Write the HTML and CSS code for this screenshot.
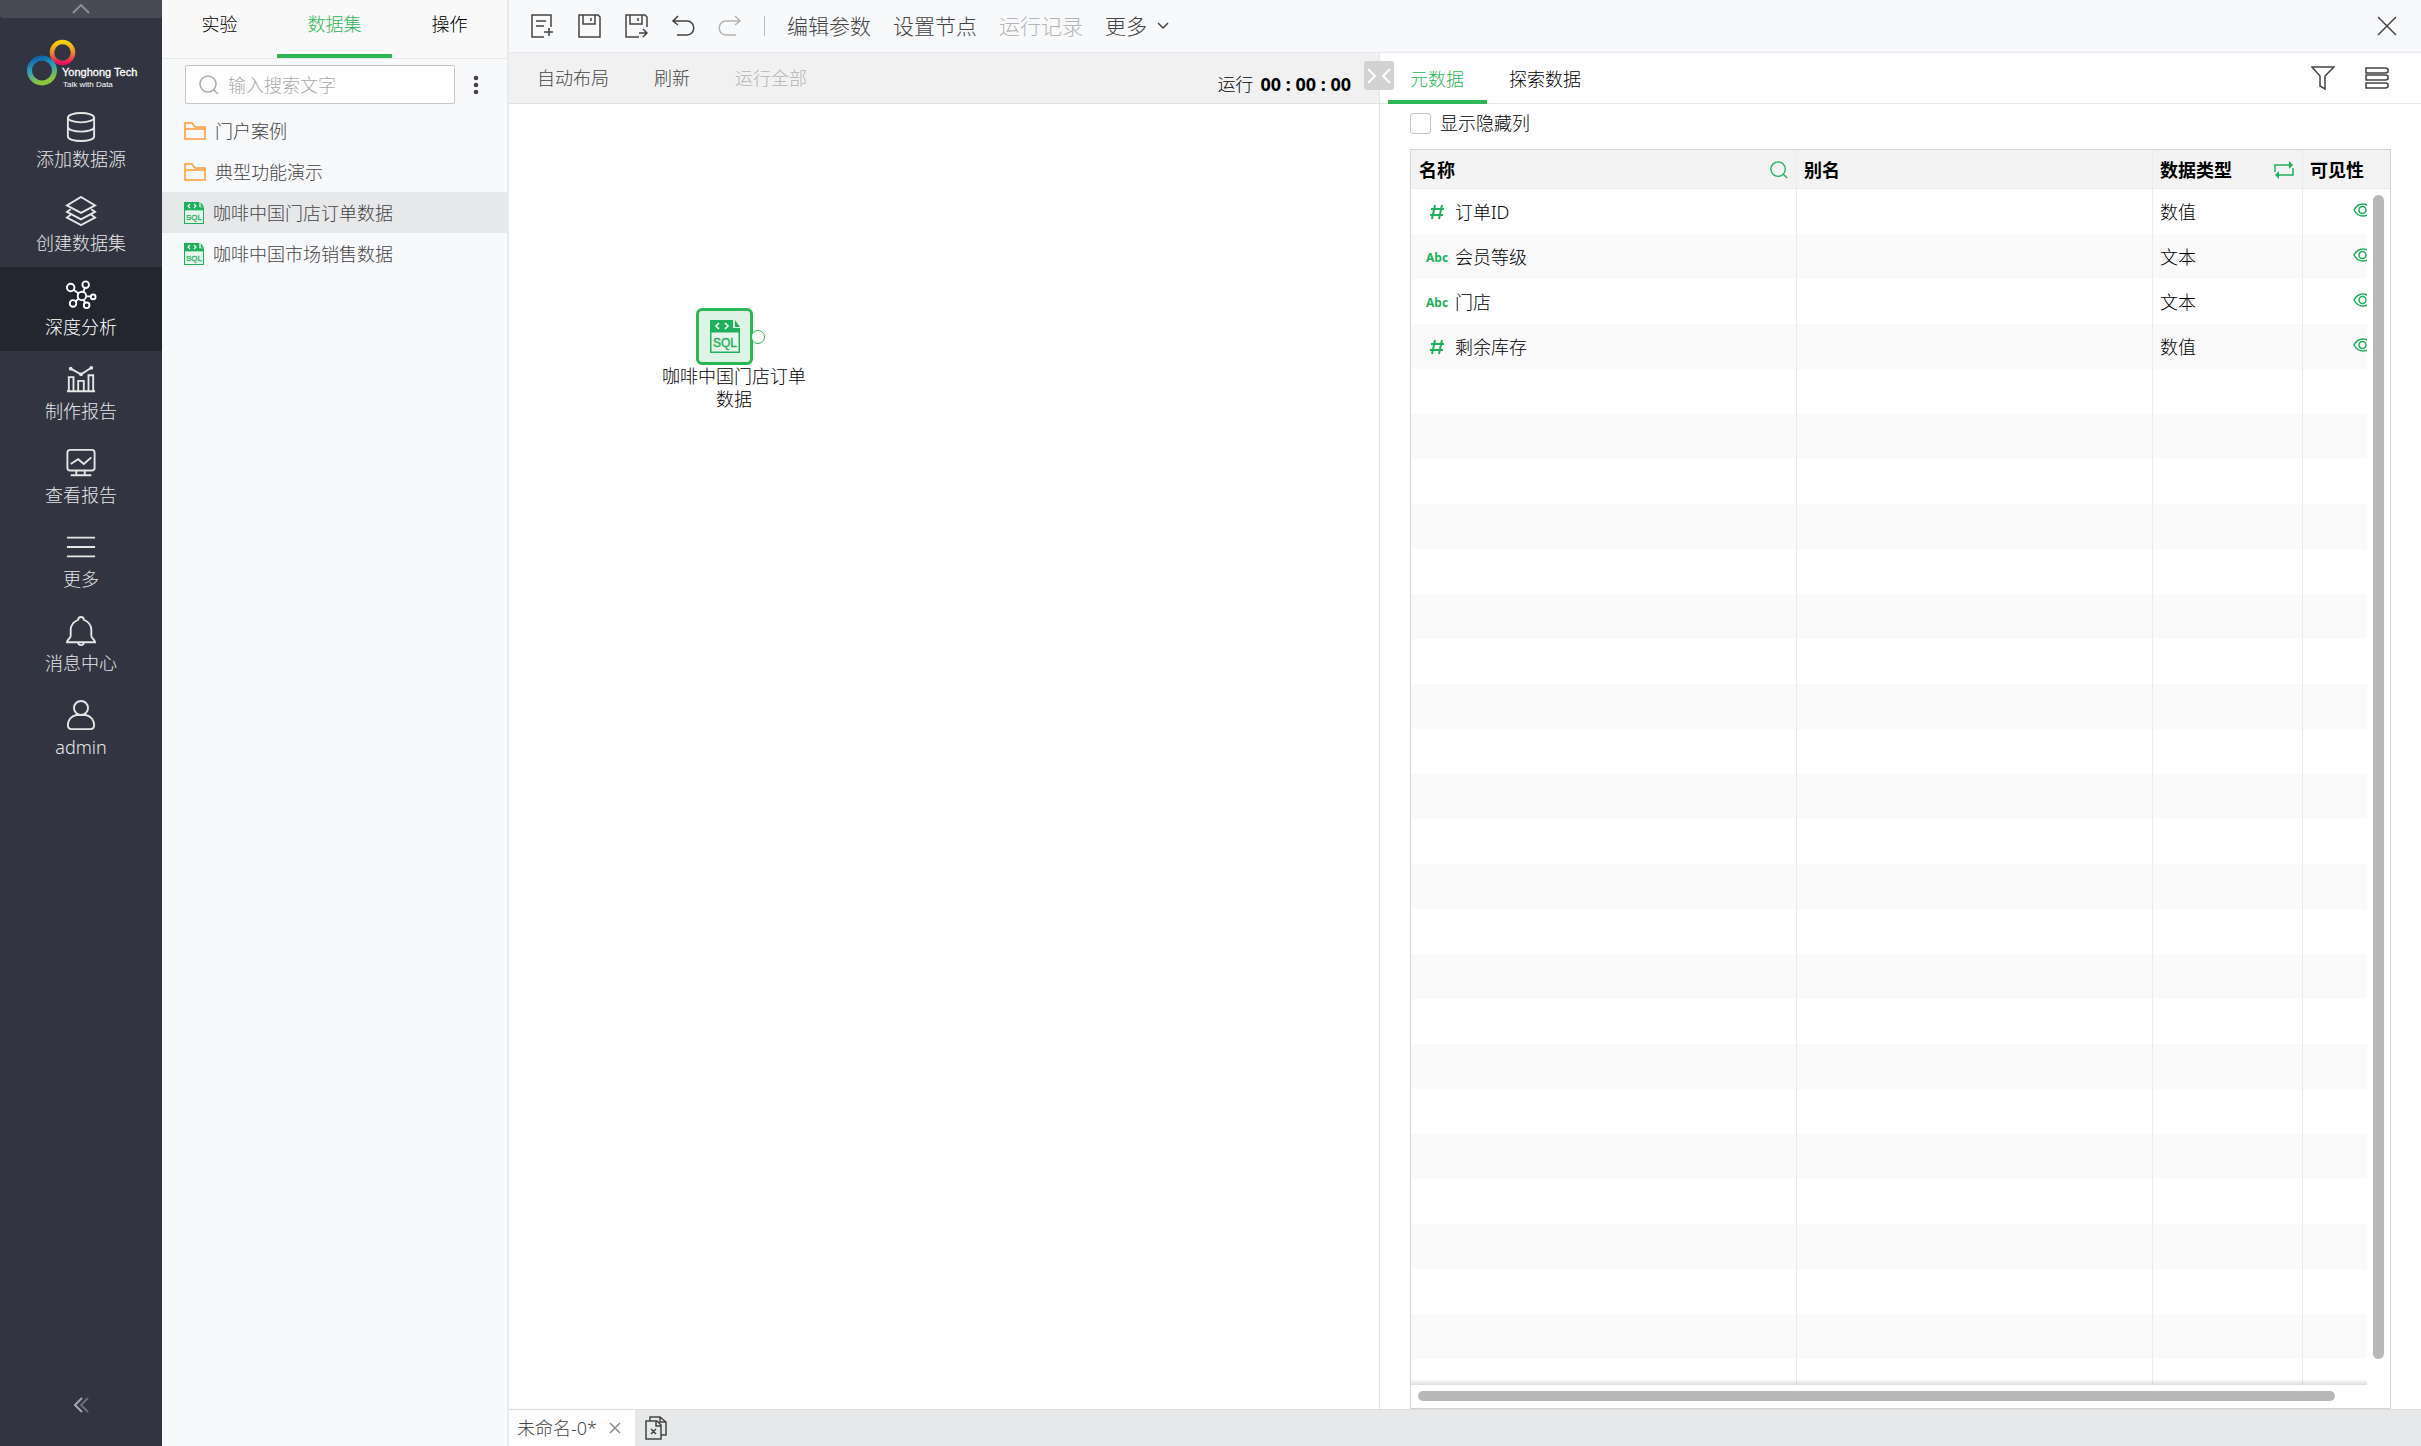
FILE: index.html
```html
<!DOCTYPE html>
<html lang="zh-CN">
<head>
<meta charset="utf-8">
<title>深度分析</title>
<link rel="stylesheet" href="styles.css">
</head>
<body>
<svg class="defs" aria-hidden="true">
  <defs>
    <symbol id="i-folder" viewBox="0 0 22 18"><path d="M1 17V1h7l3 4h10v12zM1 7h20"/></symbol>
    <symbol id="i-sql" viewBox="0 0 30 33">
      <path d="M0 0h23v8h7v25H0z" fill="#1eb05c"/><path d="M25 0l5 7h-5z" fill="#1eb05c"/>
      <path d="M1.500 12.500h27V31.500h-27z" fill="#e6f6ec"/>
      <path d="M9 3L6 6l3 3M15 3l3 3-3 3" fill="none" stroke="#fff" stroke-width="1.600"/>
      <text x="15" y="26.500" text-anchor="middle" font-family="Liberation Sans" font-size="12" fill="#1eb05c" stroke="#1eb05c" stroke-width=".4">SQL</text>
    </symbol>
    <symbol id="i-eye" viewBox="0 0 20 14"><path d="M1 7c4-8 14-8 18 0-4 8-14 8-18 0z"/><circle cx="9.500" cy="7" r="3.500"/></symbol>
    <symbol id="i-hash" viewBox="0 0 16 16"><path d="M6 1L3 15M13 1l-3 14M2 5h13M1 11h13"/></symbol>
    <symbol id="i-search" viewBox="0 0 20 20"><circle cx="9" cy="9" r="8"/><path d="M15 15l4 4"/></symbol>
  </defs>
</svg>
<div class="app">
  <nav class="side">
    <button class="side-top" aria-label="收起"><svg width="18" height="10" viewBox="0 0 18 10"><path d="M1 9l8-8 8 8"/></svg></button>
    <div class="logo">
      <svg width="112" height="56" viewBox="0 0 112 56">
        <defs>
          <linearGradient id="g1" x1="0" y1="0" x2="0" y2="1"><stop offset="0" stop-color="#f5d20c"/><stop offset=".5" stop-color="#f08a2c"/><stop offset="1" stop-color="#e5115c"/></linearGradient>
          <linearGradient id="g2" x1="0" y1="0" x2="0.300" y2="1"><stop offset="0" stop-color="#0b5aa5"/><stop offset=".5" stop-color="#2ba0c0"/><stop offset="1" stop-color="#8cc63e"/></linearGradient>
        </defs>
        <circle cx="35.500" cy="15.500" r="10.500" fill="none" stroke="url(#g1)" stroke-width="4.500"/>
        <circle cx="15" cy="33.500" r="12.500" fill="none" stroke="url(#g2)" stroke-width="5"/>
        <text x="35" y="39" font-family="Liberation Sans" font-size="11" fill="#fff" stroke="#fff" stroke-width=".3">Yonghong Tech</text>
        <text x="36" y="50" font-family="Liberation Sans" font-size="8" fill="#fff">Talk with Data</text>
      </svg>
    </div>
    <a href="#" class="side-item"><svg viewBox="0 0 32 32"><ellipse cx="16" cy="6" rx="14" ry="5"/><path d="M2 6v20c0 6.500 28 6.500 28 0V6M2 16c0 6.500 28 6.500 28 0"/></svg>添加数据源</a>
    <a href="#" class="side-item"><svg viewBox="0 0 32 32"><path d="M16 1l15 9-15 8-15-8zM5 14l-4 3 15 8 15-8-4-3M5 20l-4 3 15 8 15-8-4-3"/></svg>创建数据集</a>
    <a href="#" class="side-item active"><svg viewBox="0 0 32 32"><circle cx="17" cy="17" r="4.500"/><circle cx="5" cy="8" r="4"/><circle cx="21" cy="5" r="3.500"/><circle cx="29" cy="18" r="2.500"/><circle cx="7.500" cy="25" r="3.500"/><circle cx="22" cy="27" r="3"/><path d="M8 10.500l5.500 4M20 8.500L18.500 13M21.500 17.500h5M13.500 20L10 23M18.500 21l2 3.500"/></svg>深度分析</a>
    <a href="#" class="side-item"><svg viewBox="0 0 32 32"><path d="M1 29h30M3 29V14h5v15M13 29V18h6v11M24 29V12h5v17M5 5l11 6 11-7"/><g fill="currentColor" stroke="none"><circle cx="5" cy="5" r="2"/><circle cx="16" cy="11" r="2"/><circle cx="27" cy="4" r="2"/></g></svg>制作报告</a>
    <a href="#" class="side-item"><svg viewBox="0 0 32 32"><rect x="1.500" y="2" width="29" height="22" rx="3"/><path d="M11 24v5M20 24v5M5 29h22M5 17l8-5 6 5 8-7"/></svg>查看报告</a>
    <a href="#" class="side-item"><svg viewBox="0 0 32 32"><path d="M1 6h30M1 16h30M1 26h30"/></svg>更多</a>
    <a href="#" class="side-item"><svg viewBox="0 0 32 32"><path d="M13 4c0-4 6-4 6 0 5 2 8 6 8 11v6c0 3 4 4 4 7H1c0-3 4-4 4-7v-6c0-5 3-9 8-11zM13 28c0 4 6 4 6 0"/></svg>消息中心</a>
    <a href="#" class="side-item"><svg viewBox="0 0 32 32"><circle cx="16" cy="8.500" r="7.500"/><path d="M11 16c-6 1-9 6-9 11 0 3 1 4 4 4h20c3 0 4-1 4-4 0-5-3-10-9-11z"/></svg>admin</a>
    <button class="side-fold" aria-label="折叠"><svg width="16" height="16" viewBox="0 0 16 16"><path d="M9 1L2 8l7 7"/><path opacity=".5" d="M15 1L8 8l7 7"/></svg></button>
  </nav>

  <aside class="tree">
    <div class="tree-tabs"><button>实验</button><button class="on">数据集</button><button>操作</button></div>
    <div class="tree-search">
      <label class="search-box"><svg width="20" height="20"><use href="#i-search"/></svg><input type="text" placeholder="输入搜索文字" aria-label="搜索"></label>
      <button class="dots" aria-label="菜单"><svg width="6" height="20" viewBox="0 0 6 20"><circle cx="3" cy="3" r="2.300"/><circle cx="3" cy="10" r="2.300"/><circle cx="3" cy="17" r="2.300"/></svg></button>
    </div>
    <ul class="tree-list">
      <li><svg class="folder" width="22" height="18"><use href="#i-folder"/></svg>门户案例</li>
      <li><svg class="folder" width="22" height="18"><use href="#i-folder"/></svg>典型功能演示</li>
      <li class="sel"><svg width="20" height="22"><use href="#i-sql"/></svg>咖啡中国门店订单数据</li>
      <li><svg width="20" height="22"><use href="#i-sql"/></svg>咖啡中国市场销售数据</li>
    </ul>
  </aside>

  <div class="main">
    <header class="toolbar">
      <div class="tools">
        <button aria-label="新建"><svg width="24" height="24" viewBox="0 0 24 24"><path d="M21 13V1H2v22h12M6 7h10M6 12h8M19 14v8M14 18h9"/></svg></button>
        <button aria-label="保存"><svg width="24" height="24" viewBox="0 0 24 24"><path d="M2 1h19l2 2v20H2zM6 1v9h12V1M14 4v3"/></svg></button>
        <button aria-label="另存为"><svg width="24" height="24" viewBox="0 0 24 24"><path d="M23 13V3l-2-2H2v22h13M6 1v9h12V1M14 4v3M15 19h8M19 15l4 4-4 4"/></svg></button>
        <button aria-label="撤销"><svg width="24" height="24" viewBox="0 0 24 24"><path d="M7 2L2 7l5 4M2 7h14c9 0 9 14 0 14H6"/></svg></button>
        <button aria-label="重做" disabled><svg width="24" height="24" viewBox="0 0 24 24"><path d="M17 2l5 5-5 4M22 7H8c-9 0-9 14 0 14h10"/></svg></button>
      </div>
      <span class="sep"></span>
      <button>编辑参数</button><button>设置节点</button><button disabled>运行记录</button>
      <button class="more">更多<svg width="12" height="8" viewBox="0 0 12 8"><path d="M1 1l5 5 5-5"/></svg></button>
      <button class="close" aria-label="关闭"><svg width="20" height="20" viewBox="0 0 20 20"><path d="M1 1l18 18M19 1L1 19"/></svg></button>
    </header>
    <div class="work">
      <section class="flow">
        <div class="subbar">
          <button>自动布局</button><button>刷新</button><button disabled>运行全部</button>
          <span class="timer">运行<b>00 : 00 : 00</b></span>
        </div>
        <div class="canvas">
          <div class="node">
            <div class="node-box"><svg width="30" height="33"><use href="#i-sql"/></svg><span class="port"></span></div>
            <div class="node-name">咖啡中国门店订单数据</div>
          </div>
        </div>
        <button class="collapse" aria-label="展开"><svg width="26" height="16" viewBox="0 0 26 16"><path d="M2 1l7 7-7 7M24 1l-7 7 7 7"/></svg></button>
      </section>
      <section class="meta">
        <div class="meta-tabs">
          <button class="on">元数据</button><button>探索数据</button>
          <div class="meta-tools">
            <button aria-label="筛选"><svg width="24" height="24" viewBox="0 0 24 24"><path d="M1 1h22l-9 9v13l-5-3V10z"/></svg></button>
            <button aria-label="列表"><svg width="24" height="24" viewBox="0 0 24 24"><path d="M1 2h20l2 1v3l-2 1H1zM1 9h20l2 1v3l-2 1H1zM1 17h20l2 1v3l-2 1H1z"/></svg></button>
          </div>
        </div>
        <label class="hidden-cols"><input type="checkbox">显示隐藏列</label>
        <div class="grid">
          <div class="grid-body">
            <table>
              <colgroup><col class="c1"><col class="c2"><col class="c3"><col></colgroup>
              <thead><tr>
                <th><div>名称<svg width="18" height="18"><use href="#i-search"/></svg></div></th>
                <th>别名</th>
                <th><div>数据类型<svg width="20" height="18" viewBox="0 0 20 18"><path d="M1 11V4h16M19 7v7H4"/><path d="M15 0l4 4-4 4zM5 10l-4 4 4 4z" fill="#1eb05c" stroke="none"/></svg></div></th>
                <th>可见性</th>
              </tr></thead>
              <tbody>
                <tr><td><svg class="hash" width="16" height="16"><use href="#i-hash"/></svg>订单ID</td><td></td><td>数值</td><td class="eye"><svg width="20" height="14"><use href="#i-eye"/></svg></td></tr>
                <tr><td><span class="abc">Abc</span>会员等级</td><td></td><td>文本</td><td class="eye"><svg width="20" height="14"><use href="#i-eye"/></svg></td></tr>
                <tr><td><span class="abc">Abc</span>门店</td><td></td><td>文本</td><td class="eye"><svg width="20" height="14"><use href="#i-eye"/></svg></td></tr>
                <tr><td><svg class="hash" width="16" height="16"><use href="#i-hash"/></svg>剩余库存</td><td></td><td>数值</td><td class="eye"><svg width="20" height="14"><use href="#i-eye"/></svg></td></tr>
                <tr><td></td><td></td><td></td><td></td></tr><tr><td></td><td></td><td></td><td></td></tr>
                <tr><td></td><td></td><td></td><td></td></tr><tr><td></td><td></td><td></td><td></td></tr>
                <tr><td></td><td></td><td></td><td></td></tr><tr><td></td><td></td><td></td><td></td></tr>
                <tr><td></td><td></td><td></td><td></td></tr><tr><td></td><td></td><td></td><td></td></tr>
                <tr><td></td><td></td><td></td><td></td></tr><tr><td></td><td></td><td></td><td></td></tr>
                <tr><td></td><td></td><td></td><td></td></tr><tr><td></td><td></td><td></td><td></td></tr>
                <tr><td></td><td></td><td></td><td></td></tr><tr><td></td><td></td><td></td><td></td></tr>
                <tr><td></td><td></td><td></td><td></td></tr><tr><td></td><td></td><td></td><td></td></tr>
                <tr><td></td><td></td><td></td><td></td></tr><tr><td></td><td></td><td></td><td></td></tr>
                <tr><td></td><td></td><td></td><td></td></tr><tr><td></td><td></td><td></td><td></td></tr>
                <tr><td></td><td></td><td></td><td></td></tr><tr><td></td><td></td><td></td><td></td></tr>
                <tr><td></td><td></td><td></td><td></td></tr>
              </tbody>
            </table>
          </div>
          <div class="vbar"><i></i></div>
          <div class="hbar"><i></i></div>
        </div>
      </section>
    </div>
    <footer class="files">
      <div class="file">未命名-0*<button aria-label="关闭标签"><svg width="12" height="12" viewBox="0 0 12 12"><path d="M1 1l10 10M11 1L1 11"/></svg></button></div>
      <button class="all" aria-label="关闭全部"><svg width="22" height="24" viewBox="0 0 22 24"><path d="M1 5h11l4 4v14H1zM11 5v5h5M5 5V1h10l6 5v13h-5M15 1v5h6M6 13l5 5M11 13l-5 5"/></svg></button>
    </footer>
  </div>
</div>
</body>
</html>
```
FILE: styles.css
```css
* { box-sizing: border-box; }
body {
  margin: 0;
  font: 300 18px/24px "Noto Sans", "Noto Sans CJK SC", sans-serif;
  color: #000;
  background: #fff;
}
button {
  margin: 0; padding: 0; border: 0; background: none;
  font: inherit; color: inherit; white-space: nowrap;
}
svg { fill: none; stroke: currentColor; flex: none; }
.defs { position: absolute; width: 0; height: 0; }
.app { display: flex; height: 100vh; }

/* navigation */
.side {
  width: 162px; flex: none; display: flex; flex-direction: column;
  background: #323541; color: #e6e6e6;
}
.side-top { height: 18px; background: #484a55; color: #8c8e96; display: flex; align-items: center; justify-content: center; border-radius: 0 0 3px 3px; }
.side-top svg, .side-fold svg { stroke-width: 2; }
.logo { height: 81px; padding: 19px 0 0 27px; }
.logo svg { stroke: none; }
.side-item {
  height: 84px; padding-top: 13px; display: flex; flex-direction: column;
  align-items: center; gap: 5px; color: inherit; text-decoration: none;
}
.side-item svg { width: 32px; height: 30px; stroke-width: 2; }
.side-item.active { background: #24262f; color: #fff; }
.side-fold { margin-top: auto; height: 82px; display: flex; justify-content: center; padding-top: 33px; color: #a6a8ae; }

/* data set tree */
.tree { width: 347px; flex: none; background: #f8f9fb; border-right: 2px solid #e8eaef; color: #444; }
.tree-tabs { display: grid; grid-template-columns: repeat(3, 1fr); height: 59px; background: #f9f9f9; border-bottom: 1px solid #e6e7e9; color: #000; }
.tree-tabs button { padding-bottom: 7px; border-bottom: 4px solid transparent; }
.tree-tabs .on, .meta-tabs .on { color: #2cb656; border-bottom-color: #2cb656; }
.tree-search { display: flex; align-items: center; gap: 18px; padding: 6px 0 6px 23px; }
.search-box { display: flex; align-items: center; gap: 9px; width: 270px; height: 39px; padding-left: 13px; border: 1px solid #c6c6c6; border-radius: 2px; background: #fff; color: #aaa; }
.search-box svg { stroke-width: 1.500; }
.search-box input { width: 200px; border: 0; outline: 0; padding: 0; font: inherit; background: none; }
.search-box input::placeholder { color: #aaa; }
.dots svg { fill: #444; stroke: none; display: block; }
.tree-list { margin: 0; padding: 0; list-style: none; }
.tree-list li { display: flex; align-items: center; gap: 9px; height: 41px; padding-left: 22px; }
.tree-list .sel { background: #e7e8ea; }
.folder { color: #ff9b34; stroke-width: 1.500; }
use[href="#i-sql"] { stroke: none; }

/* main area */
.main { flex: 1; min-width: 0; display: flex; flex-direction: column; }
.toolbar { display: flex; align-items: center; height: 53px; padding: 0 24px 0 21px; background: #f8f9fb; border-bottom: 1px solid #e5e8ee; font-size: 21px; color: #444; gap: 22px; }
.tools { display: flex; gap: 23px; }
.toolbar svg { display: block; stroke-width: 1.500; }
button:disabled { color: #b4b4b4; }
.sep { width: 1px; height: 20px; background: #bbb; }
.more { display: flex; align-items: center; gap: 10px; }
.close { margin-left: auto; }
.work { flex: 1; min-height: 0; display: flex; }
.flow { position: relative; flex: 870 1 0; min-width: 0; border-right: 1px solid #e5e5e5; }
.subbar { display: flex; align-items: center; gap: 45px; height: 51px; padding: 0 28px; background: #f1f1f1; border-bottom: 1px solid #e2e2e2; color: #444; }
.timer { display: flex; gap: 7px; margin-left: auto; padding-top: 12px; color: #000; }
.timer b { font-weight: 700; }
.canvas { position: relative; }
.node { position: absolute; left: 150px; top: 204px; width: 150px; text-align: center; font-size: 18px; line-height: 23px; }
.node-box { position: relative; width: 57px; height: 57px; margin-left: 37px; display: flex; align-items: center; justify-content: center; border: 3px solid #2cb656; border-radius: 6px; background: #ddf3e5; }
.port { position: absolute; left: 52px; top: 19px; width: 14px; height: 14px; border: 1px solid #2cb656; border-radius: 50%; background: #fff; }
.collapse { position: absolute; right: -15px; top: 8px; width: 30px; height: 29px; border-radius: 3px; background: #d2d2d2; color: #fff; display: flex; align-items: center; justify-content: center; }
.collapse svg { stroke-width: 2; }

/* metadata */
.meta { flex: 1041 1 0; min-width: 0; display: flex; flex-direction: column; }
.meta-tabs { display: flex; height: 51px; padding-left: 8px; border-bottom: 1px solid #e6e6e6; }
.meta-tabs > button { height: 51px; padding: 4px 23px 0 22px; border-bottom: 4px solid transparent; }
.meta-tools { margin-left: auto; display: flex; align-items: center; gap: 30px; padding-right: 32px; color: #444; }
.meta-tools svg { display: block; stroke-width: 1.500; }
.hidden-cols { display: flex; align-items: center; gap: 9px; height: 45px; padding: 0 0 7px 30px; }
.hidden-cols input { appearance: none; width: 21px; height: 21px; margin: 0; border: 1px solid #c4c4c4; border-radius: 3px; background: #fff; }
.grid { flex: 1; min-height: 0; margin: 0 30px 0 30px; border: 1px solid #d4d4d4; display: grid; grid-template: minmax(0, 1fr) 23px / minmax(0, 1fr) 23px; background: linear-gradient(#f3f3f3 38px, #ebebeb 38px, #ebebeb 39px, #fff 39px); }
.grid-body { overflow: hidden; position: relative; }
.grid-body::after { content: ""; position: absolute; left: 0; right: 0; bottom: 0; height: 6px; background: linear-gradient(#0000, #0002); }
table { width: 100%; table-layout: fixed; border-collapse: separate; border-spacing: 0; }
.c1 { width: 386px; } .c2 { width: 356px; } .c3 { width: 150px; }
th, td { padding: 0 8px 0 7px; text-align: left; border-right: 1px solid #ebebeb; white-space: nowrap; }
th:last-child, td:last-child { border-right: 0; }
th { height: 39px; padding-top: 2px; font-weight: 700; border-bottom: 1px solid #ebebeb; }
th div { display: flex; align-items: center; justify-content: space-between; }
th svg { color: #1eb05c; stroke-width: 1.500; }
td { height: 45px; padding-top: 1px; }
tbody tr:nth-child(even) { background: #fafafa; }
th:first-child { padding-left: 8px; }
td:first-child { padding-left: 15px; }
td .abc, td .hash { display: inline-block; vertical-align: middle; color: #1eb05c; }
td .hash { stroke-width: 2; margin: 0 10px 4px 3px; }
td .abc { width: 29px; margin-bottom: 2px; font: 700 12px/18px "Noto Sans", sans-serif; }
td.eye { padding: 0 0 3px 50px; overflow: hidden; color: #1eb05c; }
.eye svg { display: block; stroke-width: 1.500; }
.vbar { padding: 45px 6px 26px; }
.vbar i, .hbar i { display: block; background: #b8b8b8; border-radius: 6px; }
.vbar i { width: 11px; height: 100%; }
.hbar { padding: 6px 32px 0 7px; }
.hbar i { height: 10px; }

/* open files */
.files { display: flex; height: 37px; background: #e7e8ea; border-top: 1px solid #dcdcdc; color: #444; }
.file { display: flex; align-items: center; gap: 12px; width: 126px; padding-left: 8px; background: #fff; }
.file button { color: #888; }
.file svg, .all svg { display: block; stroke-width: 1.500; }
.all { margin-left: 10px; }
```
